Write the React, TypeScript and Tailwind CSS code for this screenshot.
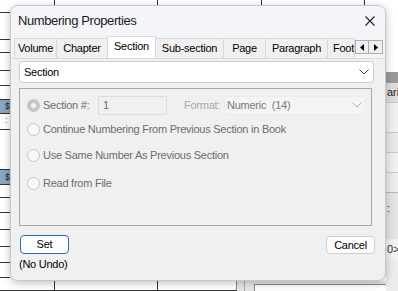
import React from "react";

const ms = { fontFamily: '"Liberation Sans", Arial, sans-serif' };

function Chevron({ color = "#555" }: { color?: string }) {
  return (
    <svg width="10" height="6" viewBox="0 0 10 6">
      <path d="M0.5 0.5 L5 5 L9.5 0.5" fill="none" stroke={color} strokeWidth="1" />
    </svg>
  );
}

function Radio({ checked = false }: { checked?: boolean }) {
  return checked ? (
    <span className="w-[13px] h-[13px] rounded-full bg-[#c5c5c5] flex items-center justify-center shrink-0">
      <span className="w-[5px] h-[5px] rounded-full bg-[#f4f4f4]" />
    </span>
  ) : (
    <span className="w-[13px] h-[13px] rounded-full border border-[#c4c4c4] bg-[#f8f8f8] shrink-0" />
  );
}

const leftRows: { h: number; blue?: boolean; dots?: boolean }[] = [
  { h: 13 }, { h: 27 }, { h: 13 }, { h: 18 }, { h: 15 }, { h: 14 },
  { h: 14, blue: true }, { h: 16, dots: true }, { h: 40 }, { h: 15, blue: true },
  { h: 13 }, { h: 15 }, { h: 17 }, { h: 17 }, { h: 16 }, { h: 15 }, { h: 13 },
];

const tabs = ["Volume", "Chapter", "Section", "Sub-section", "Page", "Paragraph", "Footnote"];
const tabW = [43, 50, 49, 68, 42, 62, 27];

export default function App() {
  return (
    <div className="relative w-[398px] h-[291px] overflow-hidden bg-white flex" style={ms}>
      {/* background: left strip */}
      <div className="w-[10px] flex flex-col shrink-0">
        {leftRows.map((r, i) => (
          <div
            key={i}
            style={{ height: r.h }}
            className={`border-b border-[#333] shrink-0 flex items-center text-[9px] leading-none pl-[5px] ${
              r.blue ? "bg-[#8aa7c4] text-[#1a2a3a]" : ""
            }`}
          >
            {r.blue ? "$" : r.dots ? <span className="text-[#555] -mt-[3px]">:</span> : null}
          </div>
        ))}
      </div>
      {/* background: middle */}
      <div className="w-[376px] shrink-0 flex flex-col justify-between">
        <div className="h-[6px] flex">
          <div className="w-[45px] border-r border-[#333]" />
          <div className="w-[103px] border-r border-[#333]" />
          <div className="w-[104px] border-r border-[#333]" />
          <div className="w-[103px] border-r border-[#333]" />
        </div>
        <div className="h-[10px] flex">
          <div className="w-[45px] border-r border-[#333] border-b" />
          <div className="w-[103px] border-r border-[#333] border-b" />
          <div className="w-[79px] border-r border-[#888] border-b border-b-[#333]" />
          <div className="w-[8px] border-r border-[#aaa] bg-[#e6e6e6]" />
          <div className="flex-1 bg-[#e6e6e6] pt-[3px] pl-[9px]">
            <div className="h-full border-l border-t border-[#888] bg-white" />
          </div>
        </div>
      </div>
      {/* background: right strip */}
      <div className="flex-1 flex flex-col bg-[#f3f3f3] overflow-hidden">
        <div className="h-[72px] bg-white" />
        <div className="h-[11px] bg-[#9a9a9a]" />
        <div className="h-[20px] bg-[#dedede] border-b border-[#c8c8c8] text-[11px] leading-[18px] text-[#222] pl-[1px]">
          ari
        </div>
        <div className="h-[30px] border-b border-[#c8c8c8] bg-[#f0f0f0]" />
        <div className="h-[20px] border-b border-[#c8c8c8] bg-[#e9e9e9]" />
        <div className="h-[20px] border-b border-[#c8c8c8] bg-[#f0f0f0]" />
        <div className="h-[20px] border-b border-[#b8b8b8] bg-[#ececec]" />
        <div className="h-[46px] bg-[#e4e4e4] text-[11px] leading-none pt-[10px] text-[#333] pl-[1px]">:</div>
        <div className="h-[22px] bg-[#f2f2f2] text-[11px] text-[#333] leading-[20px] pl-[1px] whitespace-nowrap">0&gt;</div>
        <div className="flex-1 bg-[#ececec]" />
      </div>

      {/* dialog */}
      <div className="absolute left-[10px] top-[5px] w-[376px] h-[276px] rounded-[8px] border border-[#c8c8c8] bg-[#f0f0f0] shadow-[0_2px_8px_rgba(0,0,0,0.25)] overflow-hidden flex flex-col tracking-[-0.25px]">
        {/* title */}
        <div className="h-[30px] bg-[#f3f5f9] flex items-center justify-between pl-[7px] pr-[10px] shrink-0">
          <span className="text-[13px] tracking-[-0.4px] text-[#1a1a1a]">Numbering Properties</span>
          <svg width="10" height="10" viewBox="0 0 10 10">
            <path d="M0.5 0.5 L9.5 9.5 M9.5 0.5 L0.5 9.5" stroke="#222" strokeWidth="1.1" />
          </svg>
        </div>
        {/* tabs */}
        <div className="h-[22px] flex items-end pl-[3px] bg-[#f3f5f9] shrink-0">
          {tabs.map((t, i) =>
            i === 2 ? (
              <div
                key={t}
                style={{ width: tabW[i] }}
                className="h-[22px] bg-white border border-b-0 border-[#d9d9d9] text-[11px] text-black flex items-center justify-center pb-[2px] shrink-0 whitespace-nowrap"
              >
                {t}
              </div>
            ) : (
              <div
                key={t}
                style={{ width: tabW[i] }}
                className={`h-[20px] bg-[#f0f0f0] border-t border-[#d9d9d9] ${
                  i === 0 ? "border-l border-r" : i === 1 ? "" : "border-r"
                } text-[11px] text-black flex items-center shrink-0 overflow-hidden whitespace-nowrap ${
                  i === 6 ? "justify-start pl-[5px]" : "justify-center"
                }`}
              >
                {t}
              </div>
            )
          )}
          <div className="flex h-[14px] mb-[4px]">
            <div className="w-[14px] h-[14px] border border-[#adadad] bg-[#f0f0f0] flex items-center justify-center">
              <svg width="4" height="7" viewBox="0 0 4 7"><path d="M4 0 L0 3.5 L4 7 Z" fill="#000" /></svg>
            </div>
            <div className="w-[14px] h-[14px] border border-l-0 border-[#adadad] bg-[#f0f0f0] flex items-center justify-center">
              <svg width="4" height="7" viewBox="0 0 4 7"><path d="M0 0 L4 3.5 L0 7 Z" fill="#000" /></svg>
            </div>
          </div>
        </div>
        {/* tab page */}
        <div className="flex flex-col pl-[8px] pr-[8px] pt-[2px] border-t border-[#d9d9d9] bg-[#f0f0f0]">
          <div className="h-[22px] mr-[3px] rounded-[3px] border border-[#cfcfcf] bg-white flex items-center justify-between pl-[4px] pr-[4px]">
            <span className="text-[11px] text-black">Section</span>
            <Chevron color="#444" />
          </div>
          <div className="mt-[5px] mr-[5px] h-[138px] border border-[#a8a8a8] flex flex-col pl-[7px] pr-[5px] text-[11px] text-[#6d6d6d]">
            <div className="h-[20px] mt-[6px] flex items-center whitespace-nowrap">
              <Radio checked />
              <span className="ml-[3px] w-[55px]">Section #:</span>
              <div className="w-[69px] h-[19px] border border-[#dcdcdc] bg-[#f0f0f0] pl-[4px] leading-[17px]">1</div>
              <span className="ml-[17px] w-[40px] text-[#a9a9a9]">Format:</span>
              <div className="flex-1 h-[19px] bg-[#f4f4f4] border border-[#ececec] flex items-center justify-between pl-[2px] pr-[3px] text-[#7a7a7a]">
                <span>Numeric&nbsp; (14)</span>
                <Chevron color="#b0b0b0" />
              </div>
            </div>
            <div className="h-[20px] mt-[4px] flex items-center whitespace-nowrap">
              <Radio />
              <span className="ml-[3px]">Continue Numbering From Previous Section in Book</span>
            </div>
            <div className="h-[20px] mt-[6px] flex items-center whitespace-nowrap">
              <Radio />
              <span className="ml-[3px]">Use Same Number As Previous Section</span>
            </div>
            <div className="h-[20px] mt-[8px] flex items-center whitespace-nowrap">
              <Radio />
              <span className="ml-[3px]">Read from File</span>
            </div>
          </div>
        </div>
        {/* bottom */}
        <div className="flex justify-between items-start pl-[9px] pr-[10px] mt-[9px]">
          <div className="flex flex-col items-start">
            <div className="w-[49px] h-[19px] rounded-[4px] border-[1.5px] border-[#2a6fb8] bg-[#fdfdfd] flex items-center justify-center text-[11px] text-black">
              Set
            </div>
            <span className="text-[11px] text-black leading-none mt-[5px] -ml-[1px]">(No Undo)</span>
          </div>
          <div className="w-[49px] h-[18px] mt-[1px] rounded-[4px] border border-[#cfcfcf] bg-[#fdfdfd] flex items-center justify-center text-[11px] text-black">
            Cancel
          </div>
        </div>
      </div>
    </div>
  );
}
